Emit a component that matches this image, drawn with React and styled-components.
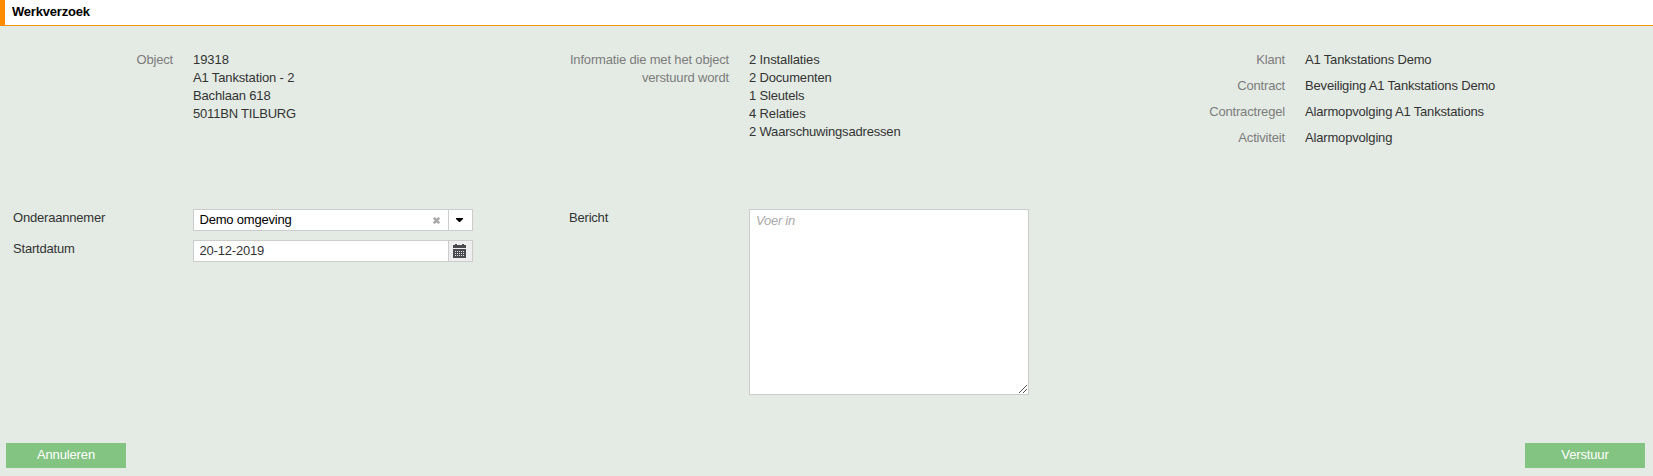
import React from "react";
import styled, { createGlobalStyle } from "styled-components";

const GlobalStyle = createGlobalStyle`
  *, *::before, *::after { box-sizing: border-box; }
  body {
    margin: 0;
    background: #e4ebe4;
    font-family: "Liberation Sans", Arial, sans-serif;
    font-size: 13px;
    line-height: 18px;
    letter-spacing: -0.17px;
    color: #333;
    overflow: hidden;
  }
`;

const Page = styled.main`
  display: flex;
  flex-direction: column;
  height: 476px;
  background: #e4ebe4;
`;

const Header = styled.header`
  height: 26px;
  flex: none;
  padding-left: 7px;
  background: #fff;
  border-left: 5px solid #ff8c00;
  border-bottom: 1px solid #f7930c;
`;

const Title = styled.h1`
  margin: 0;
  font-size: 13px;
  line-height: 23px;
  letter-spacing: -0.2px;
  font-weight: bold;
  color: #000;
`;

const Columns = styled.section`
  display: grid;
  grid-template-columns: repeat(3, 460px);
  column-gap: 96px;
  padding-left: 13px;
  height: ${(p) => p.$height}px;
  margin-top: ${(p) => p.$top}px;
  flex: none;
`;

const Stack = styled.div`
  display: flex;
  flex-direction: column;
  gap: ${(p) => p.$gap || 0}px;
`;

const Row = styled.div`
  display: grid;
  grid-template-columns: 160px 280px;
  column-gap: 20px;
  align-items: start;
`;

const InfoLabel = styled.div`
  text-align: right;
  color: #7c7c7c;
  white-space: pre;
`;

const Value = styled.div`
  white-space: nowrap;
  letter-spacing: ${(p) => (p.$spacing === undefined ? -0.17 : p.$spacing)}px;
`;

const FieldLabel = styled.label`
  letter-spacing: -0.2px;
`;

const Field = styled.div`
  display: flex;
  height: 22px;
  background: #fff;
  border: 1px solid #ccc;
`;

const Input = styled.input`
  flex: 1;
  min-width: 0;
  border: 0;
  outline: 0;
  padding: 0 0 0 5.5px;
  background: transparent;
  font: inherit;
  letter-spacing: -0.2px;
  color: ${(p) => p.$color || "#333"};
`;

const IconButton = styled.button`
  display: flex;
  align-items: center;
  justify-content: center;
  width: ${(p) => p.$width}px;
  padding: 0 ${(p) => (p.$divided ? 2 : 0)}px 0 0;
  border: 0;
  border-left: ${(p) => (p.$divided ? "1px solid #ccc" : "0")};
  background: ${(p) => p.$fill || "transparent"};
`;

const Message = styled.textarea`
  display: block;
  width: 280px;
  height: 186px;
  padding: 2px 6px;
  border: 1px solid #ccc;
  outline: 0;
  resize: none;
  background: #fff;
  font: inherit;
  letter-spacing: -0.25px;
  &::placeholder { color: #a9a9a9; font-style: italic; }
`;

const MessageBox = styled.div`
  position: relative;
`;

const Grip = styled.svg`
  position: absolute;
  right: 2px;
  bottom: 2px;
`;

const Footer = styled.footer`
  display: flex;
  justify-content: space-between;
  margin-top: auto;
  padding: 0 8px 8px 6px;
`;

const Action = styled.button`
  width: 120px;
  height: 25px;
  padding: 0 0 2px;
  border: 0;
  background: #84c483;
  color: #fff;
  font: inherit;
  letter-spacing: -0.14px;
`;

const info = [
  ["2 Installaties", -0.12],
  ["2 Documenten", -0.17],
  ["1 Sleutels", -0.17],
  ["4 Relaties", -0.12],
  ["2 Waarschuwingsadressen", -0.18],
];
const address = [
  ["19318", -0.05],
  ["A1 Tankstation - 2", -0.14],
  ["Bachlaan 618", -0.17],
  ["5011BN TILBURG", -0.2],
];
const contract = [
  ["Klant", "A1 Tankstations Demo"],
  ["Contract", "Beveiliging A1 Tankstations Demo"],
  ["Contractregel", "Alarmopvolging A1 Tankstations"],
  ["Activiteit", "Alarmopvolging"],
];

const ClearIcon = () => (
  <svg width="7" height="7" viewBox="0 0 7 7">
    <path d="M.8 .8L6.2 6.2M6.2 .8L.8 6.2" stroke="#aaa" strokeWidth="2.6" />
  </svg>
);

const CaretIcon = () => (
  <svg width="7" height="4" viewBox="0 0 7 4">
    <path d="M0 0H7V1L4 4H3L0 1Z" fill="#000" />
  </svg>
);

const CalendarIcon = () => (
  <svg width="13" height="14" viewBox="0 0 13 14" shapeRendering="crispEdges">
    <path d="M2 0H4V1H9V0H11V1H13V4H0V1H2Z" fill="#4a4a50" />
    <path d="M0 5H13V14H0Z" fill="#4a4a50" />
    <path
      d="M2 7H11M2 9H11M2 11H11"
      transform="translate(0 .5)"
      stroke="#ddd"
      strokeDasharray="1 1"
    />
  </svg>
);

const ValueList = ({ items }) => (
  <Stack>
    {items.map(([text, spacing]) => (
      <Value key={text} $spacing={spacing}>{text}</Value>
    ))}
  </Stack>
);

export default function App() {
  return (
    <Page>
      <GlobalStyle />
      <Header>
        <Title>Werkverzoek</Title>
      </Header>
      <Columns $top={25} $height={158}>
        <Row>
          <InfoLabel>Object</InfoLabel>
          <ValueList items={address} />
        </Row>
        <Row>
          <InfoLabel>{"Informatie die met het object\nverstuurd wordt"}</InfoLabel>
          <ValueList items={info} />
        </Row>
        <Stack $gap={8}>
          {contract.map(([label, value]) => (
            <Row key={label}>
              <InfoLabel>{label}</InfoLabel>
              <Value>{value}</Value>
            </Row>
          ))}
        </Stack>
      </Columns>
      <Columns $top={0} $height={186}>
        <Stack $gap={9}>
          <Row>
            <FieldLabel htmlFor="contractor">Onderaannemer</FieldLabel>
            <Field>
              <Input id="contractor" defaultValue="Demo omgeving" $color="#000" />
              <IconButton $width={23} aria-label="Wissen"><ClearIcon /></IconButton>
              <IconButton $width={24} $divided aria-label="Openen"><CaretIcon /></IconButton>
            </Field>
          </Row>
          <Row>
            <FieldLabel htmlFor="start">Startdatum</FieldLabel>
            <Field>
              <Input id="start" defaultValue="20-12-2019" />
              <IconButton $width={24} $divided $fill="#eee" aria-label="Kalender"><CalendarIcon /></IconButton>
            </Field>
          </Row>
        </Stack>
        <Row>
          <FieldLabel htmlFor="message">Bericht</FieldLabel>
          <MessageBox>
            <Message id="message" placeholder="Voer in" />
            <Grip width="8" height="8" viewBox="0 0 8 8" shapeRendering="crispEdges">
              <path
                d="M0 7h1v1h-1zM1 6h1v1h-1zM2 5h1v1h-1zM3 4h1v1h-1zM4 3h1v1h-1zM5 2h1v1h-1zM6 1h1v1h-1zM7 0h1v1h-1zM4 7h1v1h-1zM5 6h1v1h-1zM6 5h1v1h-1zM7 4h1v1h-1z"
                fill="#555"
              />
            </Grip>
          </MessageBox>
        </Row>
      </Columns>
      <Footer>
        <Action>Annuleren</Action>
        <Action>Verstuur</Action>
      </Footer>
    </Page>
  );
}
